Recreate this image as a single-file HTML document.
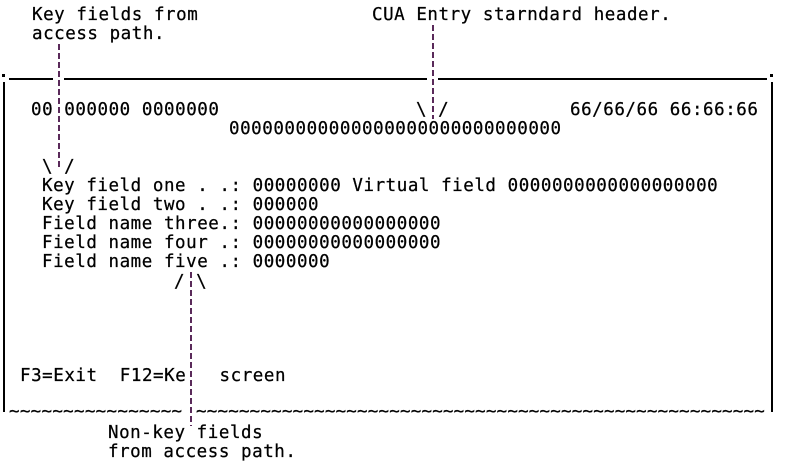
<!DOCTYPE html>
<html><head><meta charset="utf-8"><style>
body{margin:0;width:786px;height:465px;background:#fff;position:relative;overflow:hidden}
.t{position:absolute;font-family:"DejaVu Sans Mono","Liberation Mono",monospace;font-size:17.5px;line-height:19px;color:#000;white-space:pre;letter-spacing:0.55px;-webkit-text-stroke:0.25px #000;margin-top:1px}
.h{position:absolute;background:#000;height:2px;top:78px}
.v{position:absolute;width:1.5px;background:repeating-linear-gradient(to bottom,#5a2a5a 0 6px,transparent 6px 9px)}
.b{position:absolute;width:1.5px;background:#000}
</style></head><body>
<div class="t" style="left:32px;top:5px">Key fields from</div>
<div class="t" style="left:32px;top:24px">access path.</div>
<div class="t" style="left:372px;top:5px">CUA Entry starndard header.</div>
<div class="h" style="left:9px;width:44px"></div>
<div class="h" style="left:64px;width:363px"></div>
<div class="h" style="left:438px;width:329px"></div>
<div style="position:absolute;left:2px;top:74px;width:3px;height:3px;background:#000"></div>
<div style="position:absolute;left:770px;top:74px;width:3px;height:3px;background:#000"></div>
<div class="b" style="left:3px;top:82px;height:330px"></div>
<div class="b" style="left:771px;top:82px;height:330px"></div>
<div class="t" style="left:31px;top:100px">00 000000 0000000</div>
<div class="t" style="left:416px;top:100px">\ /</div>
<div class="t" style="left:570px;top:100px">66/66/66 66:66:66</div>
<div class="t" style="left:229px;top:119px">000000000000000000000000000000</div>
<div class="t" style="left:42px;top:157px">\ /</div>
<div class="t" style="left:42px;top:176px">Key field one . .: 00000000 Virtual field 0000000000000000000</div>
<div class="t" style="left:42px;top:195px">Key field two . .: 000000</div>
<div class="t" style="left:42px;top:214px">Field name three.: 00000000000000000</div>
<div class="t" style="left:42px;top:233px">Field name four .: 00000000000000000</div>
<div class="t" style="left:42px;top:252px">Field name five .: 0000000</div>
<div class="t" style="left:174px;top:272px">/ \</div>
<div class="t" style="left:20px;top:366px">F3=Exit  F12=Ke   screen</div>
<div class="t" style="left:9px;top:402px;letter-spacing:0.3px">~~~~~~~~~~~~~~~~</div>
<div class="t" style="left:196px;top:402px;letter-spacing:0.2px">~~~~~~~~~~~~~~~~~~~~~~~~~~~~~~~~~~~~~~~~~~~~~~~~~~~~~</div>
<div class="t" style="left:108px;top:423px">Non-key fields</div>
<div class="t" style="left:108px;top:442px">from access path.</div>
<div class="v" style="left:58px;top:44px;height:126px"></div>
<div class="v" style="left:432px;top:25px;height:94px"></div>
<div class="v" style="left:190px;top:272px;height:154px"></div>
</body></html>
